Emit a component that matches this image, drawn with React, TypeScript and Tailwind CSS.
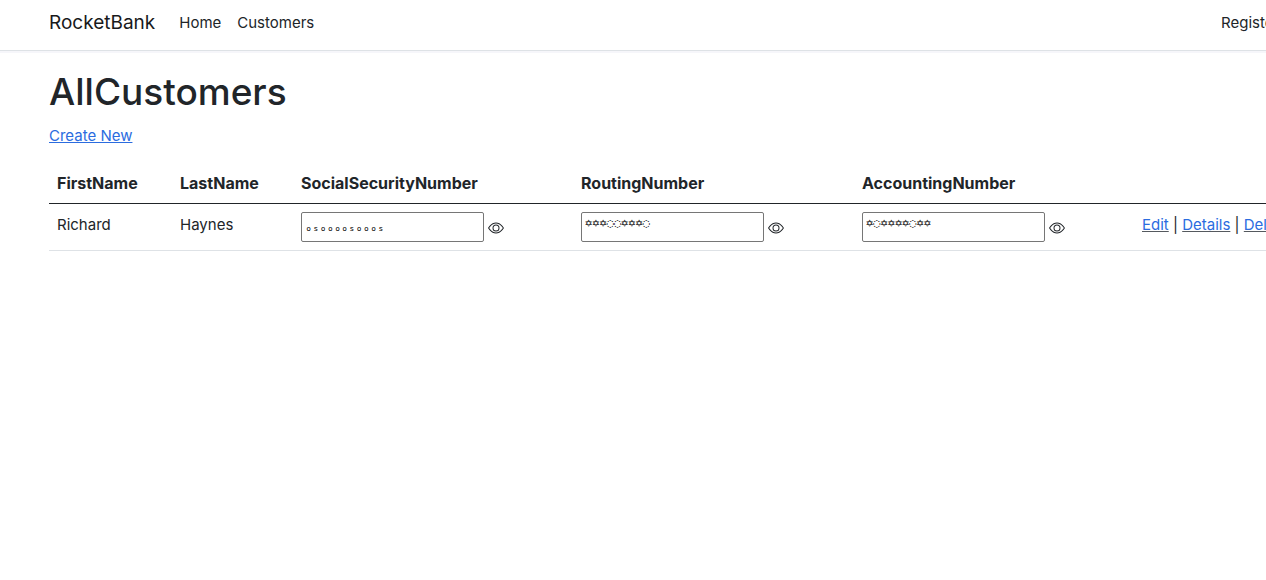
import { useState } from "react";
import { BsEye } from "react-icons/bs";

type SecretProps = { label: string; masked: string; low?: boolean };

function SecretField({ label, masked, low }: SecretProps) {
  const [value, setValue] = useState(masked);
  return (
    <div className="flex items-center gap-1">
      <input
        type="text"
        aria-label={label}
        value={value}
        onChange={(e) => setValue(e.target.value)}
        className={
          "h-[30px] w-[183px] rounded-[2px] border border-[#767676] bg-white px-[3px] font-['DejaVu_Sans_Mono',monospace] text-[12px] text-black " +
          (low ? "pb-0" : "pb-2")
        }
      />
      <button type="button" aria-label={"Show " + label} className="pt-px">
        <BsEye className="size-4" />
      </button>
    </div>
  );
}

const columns = ["FirstName", "LastName", "SocialSecurityNumber", "RoutingNumber", "AccountingNumber"];

export default function App() {
  return (
    <div className="min-h-screen overflow-hidden bg-white font-['Inter',sans-serif] text-[15px] leading-6 text-[#212529]">
      <header className="border-b border-[#dee2e6] shadow-[0_2px_0_#f6f6fa]">
        <nav className="flex h-[50px] items-start justify-between pt-2 pl-[49px]">
          <div className="flex items-center">
            <a href="#" className="mr-6 text-[19px] leading-[30px] text-[#18191b]">RocketBank</a>
            <a href="#" className="mr-4 leading-[30px]">Home</a>
            <a href="#" className="leading-[30px]">Customers</a>
          </div>
          <div className="w-[45px] shrink-0 whitespace-nowrap">
            <a href="#" className="leading-[30px]">Register</a>
          </div>
        </nav>
      </header>
      <main className="pt-[17px] pl-[49px]">
        <h1 className="mb-2 text-[37px] leading-[48px] font-medium">AllCustomers</h1>
        <p className="mb-[15px]">
          <a href="#" className="text-[#2b6cdf] underline">Create New</a>
        </p>
        <table className="w-full min-w-[1290px] table-fixed border-collapse text-left">
          <colgroup>
            <col className="w-[123px]" />
            <col className="w-[121px]" />
            <col className="w-[280px]" />
            <col className="w-[281px]" />
            <col className="w-[280px]" />
            <col />
          </colgroup>
          <thead>
            <tr className="border-b border-[#212529] text-base">
              {columns.map((name) => (
                <th key={name} scope="col" className="p-2 font-bold">{name}</th>
              ))}
              <td className="p-2" />
            </tr>
          </thead>
          <tbody>
            <tr className="border-b border-[#dee2e6] align-top leading-[26px]">
              <td className="p-2">Richard</td>
              <td className="p-2">Haynes</td>
              <td className="p-2"><SecretField label="SocialSecurityNumber" masked="ₒₛₒₒₒₒₛₒₒₒₛ" low /></td>
              <td className="p-2"><SecretField label="RoutingNumber" masked="✡✡✡◌◌✡✡✡◌" /></td>
              <td className="p-2"><SecretField label="AccountingNumber" masked="✡◌✡✡✡✡◌✡✡" /></td>
              <td className="p-2 whitespace-nowrap">
                <a href="#" className="text-[#2b6cdf] underline decoration-[#55595e]">Edit</a>
                {" | "}
                <a href="#" className="text-[#2b6cdf] underline decoration-[#55595e]">Details</a>
                {" | "}
                <a href="#" className="text-[#2b6cdf] underline decoration-[#55595e]">Delete</a>
              </td>
            </tr>
          </tbody>
        </table>
      </main>
    </div>
  );
}
